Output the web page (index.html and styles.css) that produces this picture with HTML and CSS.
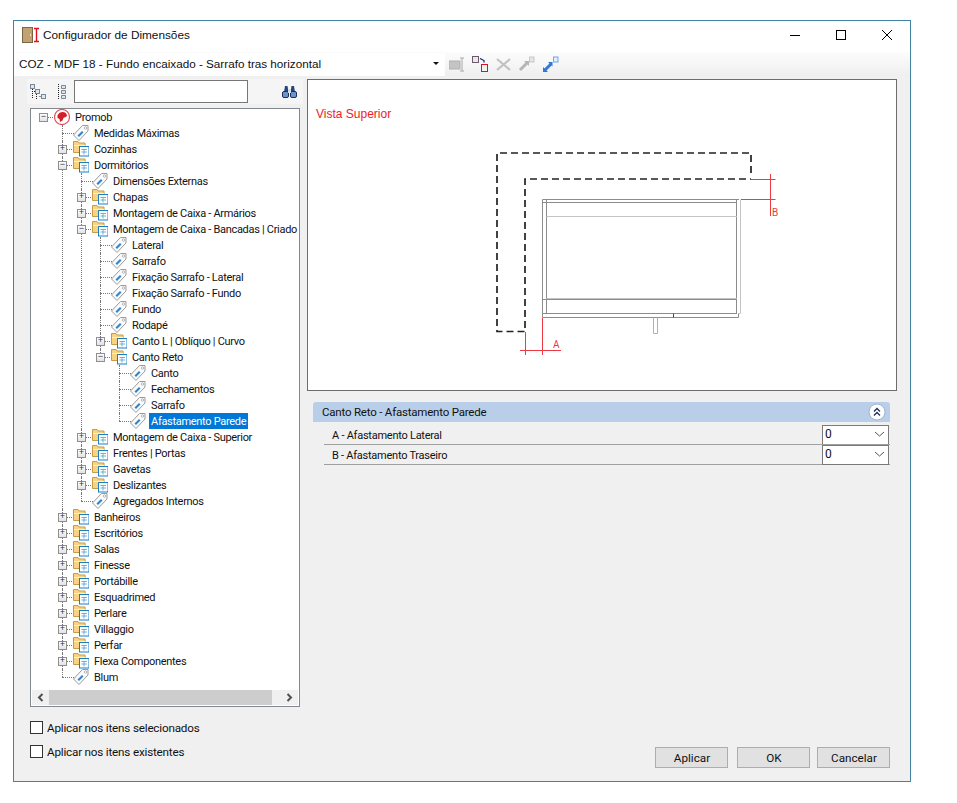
FILE: index.html
```html
<!DOCTYPE html>
<html lang="pt">
<head>
    <meta charset="UTF-8">
    <title>Configurador de Dimensões</title>
    <link rel="stylesheet" href="styles.css">
</head>
<body>
    <svg class="defs" width="0" height="0">
        <symbol id="folder" viewBox="0 0 16 16">
            <path d="M.5 .5h4.500l1 1.500h6v9.500H.500z" fill="#f7d484" stroke="#c79a48"/>
            <path d="M1 4.500h11" stroke="#fdf1c8"/>
            <rect x="6.500" y="5.500" width="9.500" height="9.500" fill="#fff" stroke="#1a7fc0"/>
            <path d="M8.500 8.500h5.500M8.500 11h5.500M11 8.500v5" stroke="#6aaede"/>
        </symbol>
        <symbol id="tag" viewBox="0 0 16 16">
            <path d="M9.500.500h5.500v5.500l-9 9.500L.500 10z" fill="#fafafa" stroke="#9a9a9a"/>
            <path d="M4.500 10.500l4.500-4.500 1.500 1.500-4.500 4.500z" fill="#2f86d0"/>
            <circle cx="12.500" cy="3" r="1.200" fill="#fff" stroke="#9a9a9a" stroke-width=".7"/>
        </symbol>
        <symbol id="promob" viewBox="0 0 16 16">
            <circle cx="8" cy="8" r="7.500" fill="#fff" stroke="#e0525a" stroke-width="1.200"/>
            <path d="M3.500 6.500c1-2.500 3-3.500 5-3.500 2.500 0 4.500 1.500 4.500 4-1 1.500-2.500 1-3.500 2l-1 2.500-2.500 1.500-.5-3-2-1z" fill="#d2202a"/>
        </symbol>
    </svg>

    <div class="window">
        <div class="titlebar">
            <svg class="app-icon" width="20" height="16" viewBox="0 0 20 16">
                <rect x="0.500" y="0.500" width="10" height="15" fill="#c2a273" stroke="#7c6544"/>
                <rect x="8" y="7" width="1" height="2" fill="#efe3c8"/>
                <path d="M14.500 1v14M12 1.500h5M12 14.500h5" stroke="#e0101c" stroke-width="1.400" fill="none"/>
            </svg>
            <span class="title">Configurador de Dimensões</span>
            <div class="win-buttons">
                <svg width="12" height="12" viewBox="0 0 12 12"><path d="M1 6.500h10" stroke="#000"/></svg>
                <svg width="12" height="12" viewBox="0 0 12 12"><rect x="1.500" y="1.500" width="9" height="9" fill="none" stroke="#000"/></svg>
                <svg width="12" height="12" viewBox="0 0 12 12"><path d="M1 1l10 10M11 1L1 11" stroke="#000"/></svg>
            </div>
        </div>

        <div class="toolbar">
            <div class="part-combo">
                <span>COZ - MDF 18 - Fundo encaixado - Sarrafo tras horizontal</span>
                <i class="combo-arrow"></i>
            </div>
            <div class="tool-icons">
                <svg width="16" height="16" viewBox="0 0 16 16">
                    <rect x="0" y="5" width="11" height="8" fill="#c4c4c4" stroke="#b0b0b0"/>
                    <path d="M11 2h4M11 15h4M13 2v13" stroke="#a8a8a8" fill="none"/>
                </svg>
                <svg width="17" height="17" viewBox="0 0 17 17">
                    <rect x="0.500" y="0.500" width="6" height="6" fill="#e8e8e8" stroke="#6b5a6a"/>
                    <path d="M8 2.500l4 2v2" stroke="#0a1f7a" fill="none" stroke-width="1.200"/>
                    <rect x="9.500" y="8.500" width="6" height="7" fill="#f2f2f2" stroke="#e01020"/>
                </svg>
                <svg width="15" height="13" viewBox="0 0 15 13"><path d="M1 1l13 11M14 1L1 12" stroke="#c2c2c2" stroke-width="2.200"/></svg>
                <svg width="17" height="17" viewBox="0 0 17 17">
                    <path d="M2 14L9 7" stroke="#b5b5b5" stroke-width="3"/>
                    <path d="M6 5h5v5z" fill="#b5b5b5"/>
                    <rect x="11.500" y="1" width="4.500" height="5" fill="#e4e4e4" stroke="#c8c8c8"/>
                </svg>
                <svg width="17" height="17" viewBox="0 0 17 17">
                    <path d="M3 14l6-6" stroke="#2f78d8" stroke-width="3"/>
                    <path d="M1 11v5h5z" fill="#2f78d8"/>
                    <path d="M6 6h4.500v4.500z" fill="#2f78d8"/>
                    <rect x="11.500" y="1" width="4.500" height="5" fill="#e4effb" stroke="#6fa6e6"/>
                </svg>
            </div>
        </div>

        <div class="content">
            <div class="left-col">
                <div class="tree-tools">
                    <svg class="tt-collapse" width="16" height="16" viewBox="0 0 16 16">
                        <rect x="0.500" y="0.500" width="4" height="4" fill="#dfe6ee" stroke="#7a8796"/>
                        <rect x="5.500" y="5.500" width="4" height="4" fill="#dfe6ee" stroke="#7a8796"/>
                        <rect x="11.500" y="10.500" width="4" height="4" fill="#dfe6ee" stroke="#7a8796"/>
                        <path d="M2.500 5v10M6.500 10v5M5 7.500H2.500M9.500 12.500h2" stroke="#222" stroke-dasharray="1 1" fill="none"/>
                    </svg>
                    <svg class="tt-expand" width="10" height="16" viewBox="0 0 10 16">
                        <path d="M1.500 0v16" stroke="#222" stroke-dasharray="1 1"/>
                        <path d="M4.500 1.500h4v3h-4zM4.500 6.500h4v3h-4zM4.500 11.500h4v3h-4z" fill="#dfe6ee" stroke="#7a8796"/>
                    </svg>
                    <input class="search" type="text">
                    <svg class="tt-find" width="15" height="13" viewBox="0 0 15 13">
                        <path d="M2 7l1-6h2.500l.5 3h3l.5-3H12l1 6z" fill="#24467f"/>
                        <rect x="0.500" y="6.500" width="6" height="6" rx="1.500" fill="#6f92c8" stroke="#14305f"/>
                        <rect x="8.500" y="6.500" width="6" height="6" rx="1.500" fill="#6f92c8" stroke="#14305f"/>
                        <rect x="6" y="4" width="3" height="4" fill="#d6deea"/>
                    </svg>
                </div>
                <div class="tree">
                    <div class="tree-scroll">
                        <ul class="root">
                            <li>
                                <div class="row"><b class="twist">&minus;</b><svg class="ic"><use href="#promob"/></svg><span class="lbl">Promob</span></div>
                                <ul>
                                    <li><div class="row"><b class="twist none"></b><svg class="ic"><use href="#tag"/></svg><span class="lbl">Medidas Máximas</span></div></li>
                                    <li><div class="row"><b class="twist">+</b><svg class="ic"><use href="#folder"/></svg><span class="lbl">Cozinhas</span></div></li>
                                    <li>
                                        <div class="row"><b class="twist">&minus;</b><svg class="ic"><use href="#folder"/></svg><span class="lbl">Dormitórios</span></div>
                                        <ul>
                                            <li><div class="row"><b class="twist none"></b><svg class="ic"><use href="#tag"/></svg><span class="lbl">Dimensões Externas</span></div></li>
                                            <li><div class="row"><b class="twist">+</b><svg class="ic"><use href="#folder"/></svg><span class="lbl">Chapas</span></div></li>
                                            <li><div class="row"><b class="twist">+</b><svg class="ic"><use href="#folder"/></svg><span class="lbl">Montagem de Caixa - Armários</span></div></li>
                                            <li>
                                                <div class="row"><b class="twist">&minus;</b><svg class="ic"><use href="#folder"/></svg><span class="lbl">Montagem de Caixa - Bancadas | Criado</span></div>
                                                <ul>
                                                    <li><div class="row"><b class="twist none"></b><svg class="ic"><use href="#tag"/></svg><span class="lbl">Lateral</span></div></li>
                                                    <li><div class="row"><b class="twist none"></b><svg class="ic"><use href="#tag"/></svg><span class="lbl">Sarrafo</span></div></li>
                                                    <li><div class="row"><b class="twist none"></b><svg class="ic"><use href="#tag"/></svg><span class="lbl">Fixação Sarrafo - Lateral</span></div></li>
                                                    <li><div class="row"><b class="twist none"></b><svg class="ic"><use href="#tag"/></svg><span class="lbl">Fixação Sarrafo - Fundo</span></div></li>
                                                    <li><div class="row"><b class="twist none"></b><svg class="ic"><use href="#tag"/></svg><span class="lbl">Fundo</span></div></li>
                                                    <li><div class="row"><b class="twist none"></b><svg class="ic"><use href="#tag"/></svg><span class="lbl">Rodapé</span></div></li>
                                                    <li><div class="row"><b class="twist">+</b><svg class="ic"><use href="#folder"/></svg><span class="lbl">Canto L | Oblíquo | Curvo</span></div></li>
                                                    <li>
                                                        <div class="row"><b class="twist">&minus;</b><svg class="ic"><use href="#folder"/></svg><span class="lbl">Canto Reto</span></div>
                                                        <ul>
                                                            <li><div class="row"><b class="twist none"></b><svg class="ic"><use href="#tag"/></svg><span class="lbl">Canto</span></div></li>
                                                            <li><div class="row"><b class="twist none"></b><svg class="ic"><use href="#tag"/></svg><span class="lbl">Fechamentos</span></div></li>
                                                            <li><div class="row"><b class="twist none"></b><svg class="ic"><use href="#tag"/></svg><span class="lbl">Sarrafo</span></div></li>
                                                            <li><div class="row"><b class="twist none"></b><svg class="ic"><use href="#tag"/></svg><span class="lbl selected">Afastamento Parede</span></div></li>
                                                        </ul>
                                                    </li>
                                                </ul>
                                            </li>
                                            <li><div class="row"><b class="twist">+</b><svg class="ic"><use href="#folder"/></svg><span class="lbl">Montagem de Caixa - Superior</span></div></li>
                                            <li><div class="row"><b class="twist">+</b><svg class="ic"><use href="#folder"/></svg><span class="lbl">Frentes | Portas</span></div></li>
                                            <li><div class="row"><b class="twist">+</b><svg class="ic"><use href="#folder"/></svg><span class="lbl">Gavetas</span></div></li>
                                            <li><div class="row"><b class="twist">+</b><svg class="ic"><use href="#folder"/></svg><span class="lbl">Deslizantes</span></div></li>
                                            <li><div class="row"><b class="twist none"></b><svg class="ic"><use href="#tag"/></svg><span class="lbl">Agregados Internos</span></div></li>
                                        </ul>
                                    </li>
                                    <li><div class="row"><b class="twist">+</b><svg class="ic"><use href="#folder"/></svg><span class="lbl">Banheiros</span></div></li>
                                    <li><div class="row"><b class="twist">+</b><svg class="ic"><use href="#folder"/></svg><span class="lbl">Escritórios</span></div></li>
                                    <li><div class="row"><b class="twist">+</b><svg class="ic"><use href="#folder"/></svg><span class="lbl">Salas</span></div></li>
                                    <li><div class="row"><b class="twist">+</b><svg class="ic"><use href="#folder"/></svg><span class="lbl">Finesse</span></div></li>
                                    <li><div class="row"><b class="twist">+</b><svg class="ic"><use href="#folder"/></svg><span class="lbl">Portábille</span></div></li>
                                    <li><div class="row"><b class="twist">+</b><svg class="ic"><use href="#folder"/></svg><span class="lbl">Esquadrimed</span></div></li>
                                    <li><div class="row"><b class="twist">+</b><svg class="ic"><use href="#folder"/></svg><span class="lbl">Perlare</span></div></li>
                                    <li><div class="row"><b class="twist">+</b><svg class="ic"><use href="#folder"/></svg><span class="lbl">Villaggio</span></div></li>
                                    <li><div class="row"><b class="twist">+</b><svg class="ic"><use href="#folder"/></svg><span class="lbl">Perfar</span></div></li>
                                    <li><div class="row"><b class="twist">+</b><svg class="ic"><use href="#folder"/></svg><span class="lbl">Flexa Componentes</span></div></li>
                                    <li><div class="row"><b class="twist none"></b><svg class="ic"><use href="#tag"/></svg><span class="lbl">Blum</span></div></li>
                                </ul>
                            </li>
                        </ul>
                    </div>
                    <div class="hscroll">
                        <svg width="17" height="15" viewBox="0 0 17 15"><path d="M10.500 4l-3.500 3.500 3.500 3.500" fill="none" stroke="#505050" stroke-width="2"/></svg>
                        <div class="thumb-track"><div class="thumb"></div></div>
                        <svg width="17" height="15" viewBox="0 0 17 15"><path d="M6.500 4l3.500 3.500-3.500 3.500" fill="none" stroke="#505050" stroke-width="2"/></svg>
                    </div>
                </div>
            </div>

            <div class="right-col">
                <div class="preview">
                    <p class="view-name">Vista Superior</p>
                    <svg class="drawing" width="588" height="310" viewBox="308 80 588 310">
                        <path d="M751 173V153H497V331.500H525V179H751" fill="none" stroke="#222" stroke-width="1.700" stroke-dasharray="7 4"/>
                        <g fill="none" stroke="#8c8c8c">
                            <path d="M542.500 199.500H739M542.500 202.500H737M546.500 199.500V313.500M736.500 199.500V313.500M542.500 199.500V317.500M542.500 299.500H737M542.500 313.500H737M542.500 317.500H738.500V313.500"/>
                            <path d="M546.500 216.500H737M546.500 298.500H737M740.500 199.500V313.500H738" stroke="#c4c4c4"/>
                            <path d="M653.500 317.500V333.500H657.500V317.500" stroke="#b0b0b0"/>
                            <path d="M673.500 313.500V317.500" stroke="#444"/>
                        </g>
                        <g fill="none" stroke="#ee3a44">
                            <path d="M751 179.500H775.500M741 199.500H775.500M770.500 174V216"/>
                            <path d="M525.500 332V355M542.500 318V355M520 350.500H561"/>
                        </g>
                        <text class="dim" x="553" y="348">A</text>
                        <text class="dim" x="772" y="216">B</text>
                    </svg>
                </div>

                <div class="props">
                    <div class="props-head">
                        <span>Canto Reto - Afastamento Parede</span>
                        <svg width="18" height="18" viewBox="0 0 18 18">
                            <circle cx="9" cy="9" r="8" fill="#fff" stroke="#9db5d2"/>
                            <path d="M6 8.500l3-3 3 3M6 12.500l3-3 3 3" fill="none" stroke="#1d2f5a" stroke-width="1.300"/>
                        </svg>
                    </div>
                    <div class="prop-row">
                        <span class="prop-name">A - Afastamento Lateral</span>
                        <div class="prop-value">0<svg width="11" height="6" viewBox="0 0 11 6"><path d="M1 1l4.500 4L10 1" fill="none" stroke="#555"/></svg></div>
                    </div>
                    <div class="prop-row">
                        <span class="prop-name">B - Afastamento Traseiro</span>
                        <div class="prop-value">0<svg width="11" height="6" viewBox="0 0 11 6"><path d="M1 1l4.500 4L10 1" fill="none" stroke="#555"/></svg></div>
                    </div>
                </div>
            </div>

            <div class="footer">
                <div class="checks">
                    <label><i class="box"></i>Aplicar nos itens selecionados</label>
                    <label><i class="box"></i>Aplicar nos itens existentes</label>
                </div>
                <div class="buttons">
                    <button>Aplicar</button>
                    <button class="ok">OK</button>
                    <button>Cancelar</button>
                </div>
            </div>
        </div>
    </div>
</body>
</html>
```

FILE: styles.css
```css
html, body {
    margin: 0;
    padding: 0;
    background-color: white;
}
body {
    font-family: Roboto, "Liberation Sans", Arial, sans-serif;
    font-size: 11px;
    color: #111;
}
.defs {
    position: absolute;
}
.window {
    box-sizing: border-box;
    display: flex;
    flex-direction: column;
    width: 898px;
    height: 762px;
    margin: 20px 0 0 13px;
    border: 1px solid #3f84a3;
    background-color: #f0f0f0;
}

/* title bar */
.titlebar {
    display: flex;
    align-items: center;
    box-sizing: border-box;
    height: 31px;
    padding-bottom: 3px;
    flex: none;
    background-color: white;
}
.app-icon {
    margin-left: 8px;
}
.title {
    margin-left: 1px;
    font-family: "Liberation Sans", Arial, sans-serif;
    font-size: 11.8px;
}
.win-buttons {
    display: flex;
    gap: 34px;
    margin-left: auto;
    margin-right: 17px;
}

/* toolbar */
.toolbar {
    display: flex;
    align-items: center;
    height: 24px;
    flex: none;
    background: linear-gradient(#fcfcfc, #efefef);
}
.part-combo {
    display: flex;
    align-items: center;
    box-sizing: border-box;
    width: 431px;
    height: 23px;
    padding: 0 6px 2px 5px;
    background-color: white;
    font-family: "Liberation Sans", Arial, sans-serif;
    font-size: 11.7px;
}
.combo-arrow {
    width: 0;
    height: 0;
    margin-left: auto;
    border-left: 3px solid transparent;
    border-right: 3px solid transparent;
    border-top: 3px solid #111;
}
.tool-icons {
    display: flex;
    align-items: center;
    gap: 7px;
    margin-left: 4px;
}

/* main area */
.content {
    display: grid;
    grid-template-columns: 270px 590px;
    grid-template-rows: 628px 1fr;
    column-gap: 7px;
    padding: 3px 0 0 16px;
    flex: 1;
    min-height: 0;
}
.left-col {
    display: flex;
    flex-direction: column;
    min-height: 0;
}
.tree-tools {
    display: flex;
    align-items: center;
    height: 25px;
    margin: 0 -3px 4px;
    padding-right: 6px;
    background-color: #f5f5f5;
    flex: none;
}
.tt-collapse {
    margin-left: 3px;
}
.tt-expand {
    margin-left: 11px;
}
.search {
    box-sizing: border-box;
    width: 174px;
    height: 23px;
    margin-left: 7px;
    border: 1px solid #767676;
    background-color: white;
}
.tt-find {
    margin-left: auto;
}

/* tree */
.tree {
    display: flex;
    flex-direction: column;
    flex: 1;
    min-height: 0;
    box-sizing: border-box;
    border: 1px solid #828790;
    background-color: white;
}
.tree-scroll {
    flex: 1;
    min-height: 0;
    overflow: hidden;
}
.tree ul {
    list-style: none;
    margin: 0;
    padding: 0 0 0 19px;
}
.tree ul.root {
    padding: 0;
}
.tree li {
    position: relative;
}
.tree li::before {
    content: "";
    position: absolute;
    left: 12px;
    top: 0;
    height: 100%;
    border-left: 1px dotted #777;
}
.tree li:last-child::before {
    height: 8px;
}
.tree .root > li::before {
    display: none;
}
.tree li::after {
    content: "";
    position: absolute;
    left: 12px;
    top: 8px;
    width: 14px;
    border-top: 1px dotted #777;
}
.row {
    position: relative;
    z-index: 1;
    display: flex;
    align-items: center;
    height: 16px;
    padding-left: 8px;
    white-space: nowrap;
}
.twist {
    box-sizing: border-box;
    display: flex;
    align-items: center;
    justify-content: center;
    flex: none;
    width: 9px;
    height: 9px;
    border: 1px solid #8e8f8f;
    background: linear-gradient(#fff, #e2e2e2);
    font-family: "Liberation Mono", monospace;
    font-size: 9px;
    font-weight: normal;
    line-height: 1;
    color: #1f2f5f;
}
.twist.none {
    visibility: hidden;
}
.ic {
    flex: none;
    width: 16px;
    height: 16px;
    margin-left: 6px;
    overflow: visible;
}
.lbl {
    height: 16px;
    margin-left: 3px;
    padding: 0 2px;
    line-height: 18px;
    letter-spacing: -0.3px;
}
.lbl.selected {
    background-color: #0078d7;
    color: white;
}
.hscroll {
    display: flex;
    align-items: center;
    flex: none;
    height: 15px;
    margin: 0 1px 1px;
    background-color: #f0f0f0;
}
.thumb-track {
    flex: 1;
    height: 15px;
}
.thumb {
    width: 223px;
    height: 15px;
    background-color: #cdcdcd;
}

/* right side */
.right-col {
    display: flex;
    flex-direction: column;
}
.preview {
    position: relative;
    box-sizing: border-box;
    height: 312px;
    border: 1px solid #6d6d6d;
    background-color: white;
}
.view-name {
    position: absolute;
    left: 8px;
    top: 27px;
    margin: 0;
    font-family: "Liberation Sans", Arial, sans-serif;
    font-size: 12px;
    color: #ee1c25;
}
.drawing {
    display: block;
}
.dim {
    font-size: 10px;
    fill: #ee3a44;
}
.props {
    margin: 11px 7px 0 6px;
}
.props-head {
    display: flex;
    align-items: center;
    justify-content: space-between;
    box-sizing: border-box;
    height: 20px;
    padding: 0 4px 0 9px;
    background-color: #b9cfe9;
    border-radius: 3px 3px 0 0;
    font-size: 11.5px;
    letter-spacing: -0.2px;
}
.prop-row {
    display: flex;
    align-items: stretch;
    height: 20px;
    margin-left: 11px;
    border-bottom: 1px solid #a0a0a0;
    box-sizing: border-box;
}
.props-head + .prop-row {
    margin-top: 3px;
}
.prop-name {
    flex: 1;
    padding-left: 8px;
    line-height: 22px;
    letter-spacing: -0.25px;
}
.prop-value {
    display: flex;
    align-items: center;
    justify-content: space-between;
    box-sizing: border-box;
    width: 67px;
    margin-right: 1px;
    padding: 0 3px 2px 2px;
    border: 1px solid #7a7a7a;
    border-bottom: none;
    background-color: white;
    font-size: 12px;
}
.prop-row:last-child .prop-value {
    height: 20px;
    border-bottom: 1px solid #7a7a7a;
}

/* footer */
.footer {
    grid-column: 1 / 3;
    display: flex;
    justify-content: space-between;
    align-items: flex-end;
    padding: 0 7px 13px 0;
}
.checks {
    display: flex;
    flex-direction: column;
    gap: 11px;
    margin-bottom: 10px;
}
.checks label {
    display: flex;
    align-items: center;
    height: 13px;
    font-size: 11.7px;
    letter-spacing: -0.2px;
}
.box {
    box-sizing: border-box;
    width: 13px;
    height: 13px;
    margin-right: 4px;
    border: 1px solid #333;
    background-color: white;
}
.buttons {
    display: flex;
    gap: 8px;
}
.buttons button {
    box-sizing: border-box;
    width: 73px;
    height: 21px;
    padding: 0 0 0 1px;
    border: 1px solid #adadad;
    background-color: #e1e1e1;
    font-family: inherit;
    font-size: 11.7px;
    color: #111;
}
.buttons .ok {
    margin: 0 -1px 0 1px;
}
```
